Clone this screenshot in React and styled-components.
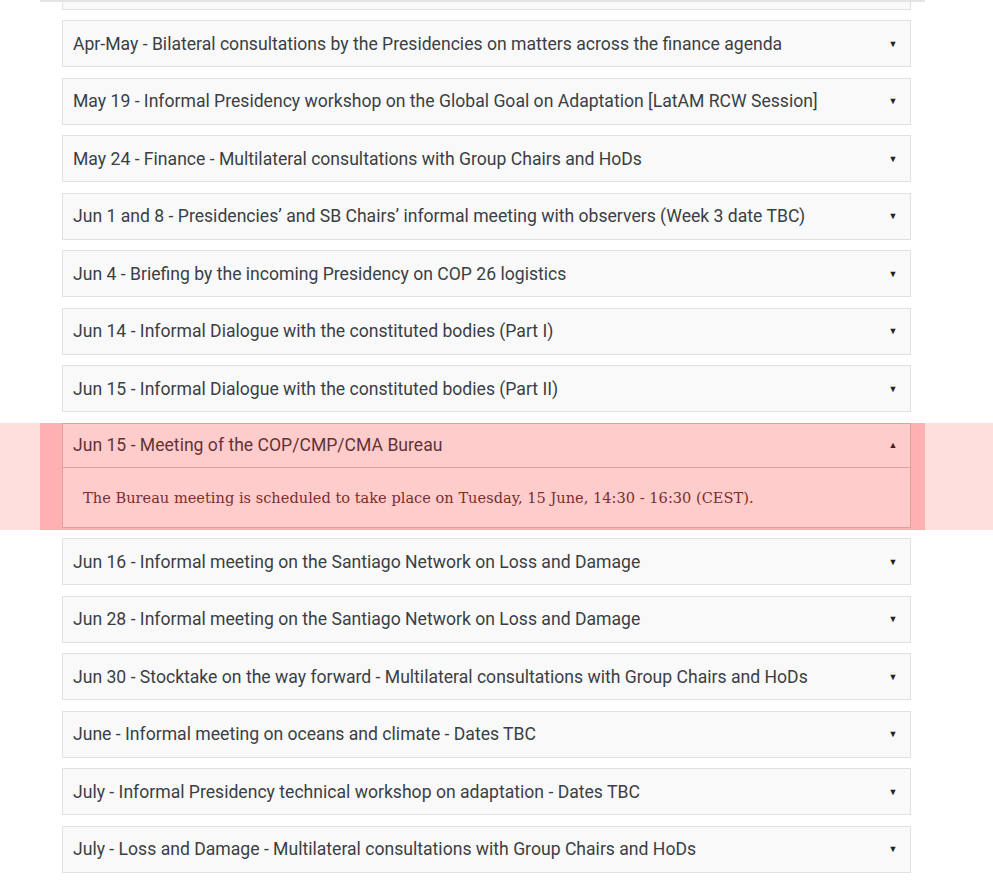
import React from 'react';
import styled, { createGlobalStyle } from 'styled-components';

const GlobalStyle = createGlobalStyle`
    body {
        margin: 0;
        background: #ffffff;
        font-family: Roboto, "Liberation Sans", sans-serif;
        overflow: hidden;
    }
`;

const Page = styled.div`
    width: 993px;
    height: 882px;
    position: relative;
    overflow: hidden;
`;

const TopEdge = styled.div`
    position: absolute;
    top: 0;
    left: 40px;
    width: 885px;
    height: 2px;
    background: #e4e4e4;
    z-index: 2;
`;

const List = styled.div`
    margin-top: -37.5px;
`;

const Band = styled.div`
    position: relative;
    padding: 0 0 0 62px;
    ${p => p.$highlight && `
        background: rgba(255, 0, 0, 0.13);
        padding: 0 0 2px 62px;
        margin-bottom: 8.5px;
        &:before {
            content: '';
            position: absolute;
            left: 40px;
            top: 0;
            width: 885px;
            height: 100%;
            background: rgba(255, 0, 0, 0.2);
            pointer-events: none;
        }
    `}
`;

const Item = styled.div`
    width: 847px;
    border: 1px solid #dfe1e3;
    background: #f9f9f9;
    margin-bottom: ${p => (p.$open ? '0' : '10.5px')};
    ${p => p.$open && `
        background: #ffffff;
        border-color: #d9c9c9;
    `}
`;

const Header = styled.div`
    display: flex;
    align-items: center;
    justify-content: space-between;
    padding: 0 12px 0 10px;
    font-size: 17.6px;
    color: #3a3f45;
    border-bottom: ${p => (p.$open ? '1px solid #d9c9c9' : 'none')};
    height: ${p => (p.$open ? '43px' : '45px')};
`;

const Caret = styled.span`
    font-size: 9px;
    color: #222;
    width: 10px;
    text-align: center;
`;

const Body = styled.div`
    height: 59px;
    display: flex;
    align-items: center;
    padding: 0 20px;
    font-family: "DejaVu Serif", "Liberation Serif", serif;
    font-size: 14.6px;
    color: #5a3a3a;
`;

const items = [
    '',
    'Apr-May - Bilateral consultations by the Presidencies on matters across the finance agenda',
    'May 19 - Informal Presidency workshop on the Global Goal on Adaptation [LatAM RCW Session]',
    'May 24 - Finance - Multilateral consultations with Group Chairs and HoDs',
    'Jun 1 and 8 - Presidencies’ and SB Chairs’ informal meeting with observers (Week 3 date TBC)',
    'Jun 4 - Briefing by the incoming Presidency on COP 26 logistics',
    'Jun 14 - Informal Dialogue with the constituted bodies (Part I)',
    'Jun 15 - Informal Dialogue with the constituted bodies (Part II)',
];

const after = [
    'Jun 16 - Informal meeting on the Santiago Network on Loss and Damage',
    'Jun 28 - Informal meeting on the Santiago Network on Loss and Damage',
    'Jun 30 - Stocktake on the way forward - Multilateral consultations with Group Chairs and HoDs',
    'June - Informal meeting on oceans and climate - Dates TBC',
    'July - Informal Presidency technical workshop on adaptation - Dates TBC',
    'July - Loss and Damage - Multilateral consultations with Group Chairs and HoDs',
];

const Row = ({ title }) => (
    <Band>
        <Item>
            <Header>
                <span>{title}</span>
                {title && <Caret>▼</Caret>}
            </Header>
        </Item>
    </Band>
);

export default function App() {
    return (
        <Page>
            <GlobalStyle />
            <TopEdge />
            <List>
                {items.map((t, i) => <Row key={i} title={t} />)}
                <Band $highlight>
                    <Item $open>
                        <Header $open>
                            <span>Jun 15 - Meeting of the COP/CMP/CMA Bureau</span>
                            <Caret>▲</Caret>
                        </Header>
                        <Body>The Bureau meeting is scheduled to take place on Tuesday, 15 June, 14:30 - 16:30 (CEST).</Body>
                    </Item>
                </Band>
                {after.map((t, i) => <Row key={i} title={t} />)}
            </List>
        </Page>
    );
}
